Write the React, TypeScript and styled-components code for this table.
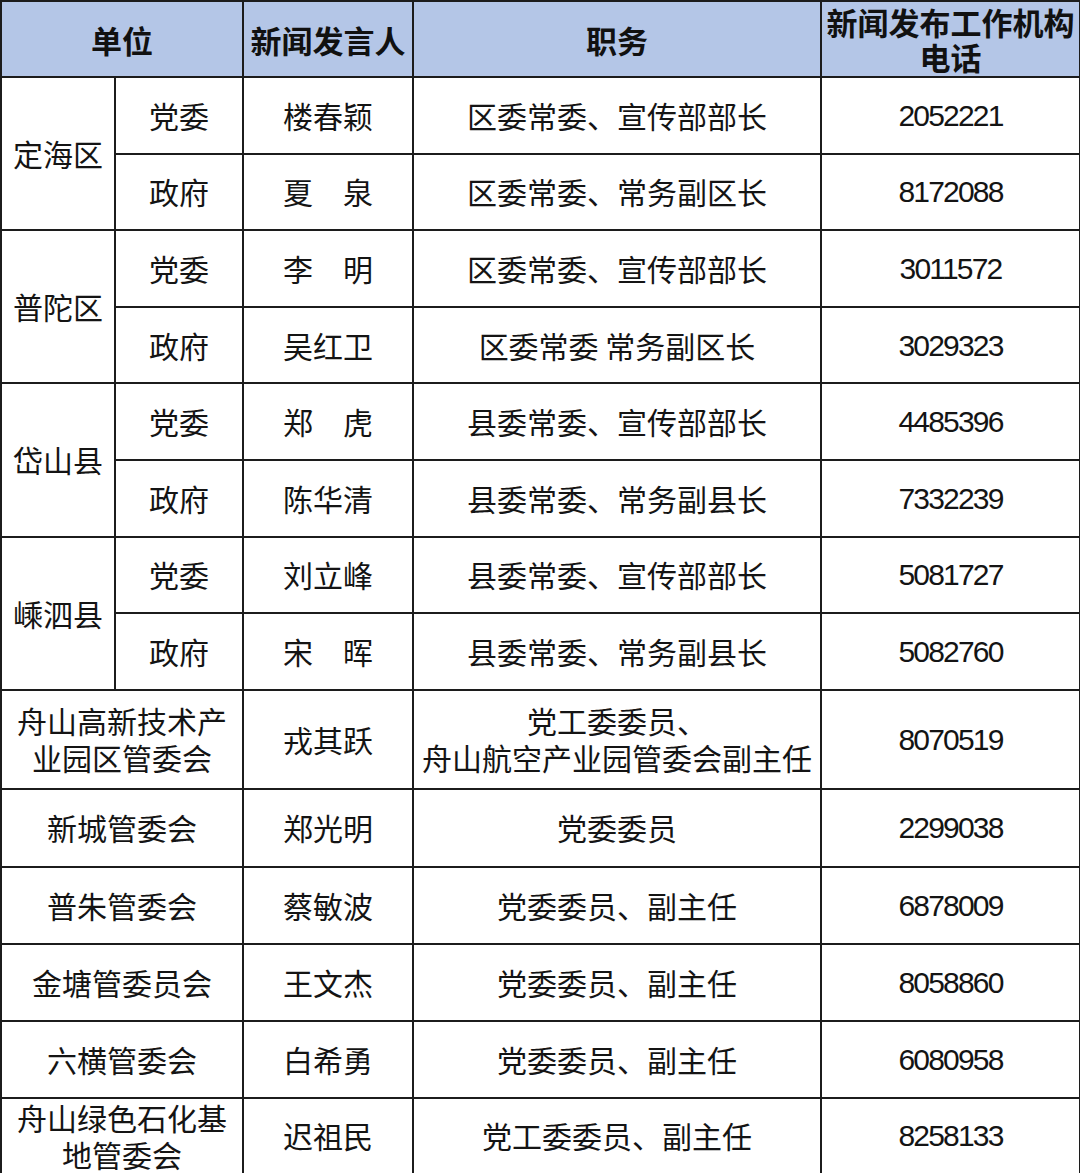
import styled, { createGlobalStyle } from 'styled-components';

const GlobalStyle = createGlobalStyle`
  html, body {
    margin: 0;
    padding: 0;
    background: #ffffff;
  }
  body {
    font-family: "Noto Sans CJK SC", "Noto Sans", sans-serif;
    color: #141414;
  }
`;

const Table = styled.table`
  width: 1079px;
  border-collapse: collapse;
  table-layout: fixed;
  font-family: "Noto Sans CJK SC", "Noto Sans", sans-serif;
`;

const HeadRow = styled.tr`
  height: 76px;
  background: #b4c6e7;
`;

const Row = styled.tr<{ $h: number }>`
  height: ${(p) => p.$h}px;
`;

const HeadCell = styled.th`
  border: 2px solid #1c1c1c;
  padding: 0;
  font-size: 31px;
  font-weight: 700;
  line-height: 35px;
  text-align: center;
  vertical-align: middle;
  color: #111;
`;

const Cell = styled.td`
  border: 2px solid #1c1c1c;
  padding: 0;
  font-size: 30px;
  font-weight: 400;
  line-height: 37px;
  text-align: center;
  vertical-align: middle;
  color: #141414;
  white-space: nowrap;
`;

const Phone = styled(Cell)`
  font-family: "Liberation Sans", "Noto Sans", sans-serif;
  letter-spacing: -1.8px;
`;

type Sub = { org: string; name: string; role: string; phone: string };
type Region = { region: string; subs: Sub[] };
type Single = { unit: string[]; name: string; role: string[]; phone: string; h: number };

const regions: Region[] = [
  {
    region: '定海区',
    subs: [
      { org: '党委', name: '楼春颖', role: '区委常委、宣传部部长', phone: '2052221' },
      { org: '政府', name: '夏　泉', role: '区委常委、常务副区长', phone: '8172088' },
    ],
  },
  {
    region: '普陀区',
    subs: [
      { org: '党委', name: '李　明', role: '区委常委、宣传部部长', phone: '3011572' },
      { org: '政府', name: '吴红卫', role: '区委常委 常务副区长', phone: '3029323' },
    ],
  },
  {
    region: '岱山县',
    subs: [
      { org: '党委', name: '郑　虎', role: '县委常委、宣传部部长', phone: '4485396' },
      { org: '政府', name: '陈华清', role: '县委常委、常务副县长', phone: '7332239' },
    ],
  },
  {
    region: '嵊泗县',
    subs: [
      { org: '党委', name: '刘立峰', role: '县委常委、宣传部部长', phone: '5081727' },
      { org: '政府', name: '宋　晖', role: '县委常委、常务副县长', phone: '5082760' },
    ],
  },
];

const singles: Single[] = [
  {
    unit: ['舟山高新技术产', '业园区管委会'],
    name: '戎其跃',
    role: ['党工委委员、', '舟山航空产业园管委会副主任'],
    phone: '8070519',
    h: 99,
  },
  { unit: ['新城管委会'], name: '郑光明', role: ['党委委员'], phone: '2299038', h: 78 },
  { unit: ['普朱管委会'], name: '蔡敏波', role: ['党委委员、副主任'], phone: '6878009', h: 77 },
  { unit: ['金塘管委员会'], name: '王文杰', role: ['党委委员、副主任'], phone: '8058860', h: 77 },
  { unit: ['六横管委会'], name: '白希勇', role: ['党委委员、副主任'], phone: '6080958', h: 77 },
  { unit: ['舟山绿色石化基', '地管委会'], name: '迟祖民', role: ['党工委委员、副主任'], phone: '8258133', h: 76 },
];

const lines = (parts: string[]) =>
  parts.map((t, i) => (
    <span key={i}>
      {t}
      {i < parts.length - 1 && <br />}
    </span>
  ));

export default function App() {
  return (
    <>
      <GlobalStyle />
      <Table>
        <colgroup>
          <col style={{ width: 114 }} />
          <col style={{ width: 128 }} />
          <col style={{ width: 170 }} />
          <col style={{ width: 408 }} />
          <col style={{ width: 259 }} />
        </colgroup>
        <thead>
          <HeadRow>
            <HeadCell colSpan={2}>单位</HeadCell>
            <HeadCell>新闻发言人</HeadCell>
            <HeadCell>职务</HeadCell>
            <HeadCell>
              新闻发布工作机构
              <br />
              电话
            </HeadCell>
          </HeadRow>
        </thead>
        <tbody>
          {regions.map((r) =>
            r.subs.map((s, i) => (
              <Row key={r.region + s.org} $h={76.6}>
                {i === 0 && <Cell rowSpan={r.subs.length}>{r.region}</Cell>}
                <Cell>{s.org}</Cell>
                <Cell>{s.name}</Cell>
                <Cell>{s.role}</Cell>
                <Phone>{s.phone}</Phone>
              </Row>
            )),
          )}
          {singles.map((s) => (
            <Row key={s.phone} $h={s.h}>
              <Cell colSpan={2}>{lines(s.unit)}</Cell>
              <Cell>{s.name}</Cell>
              <Cell>{lines(s.role)}</Cell>
              <Phone>{s.phone}</Phone>
            </Row>
          ))}
        </tbody>
      </Table>
    </>
  );
}
